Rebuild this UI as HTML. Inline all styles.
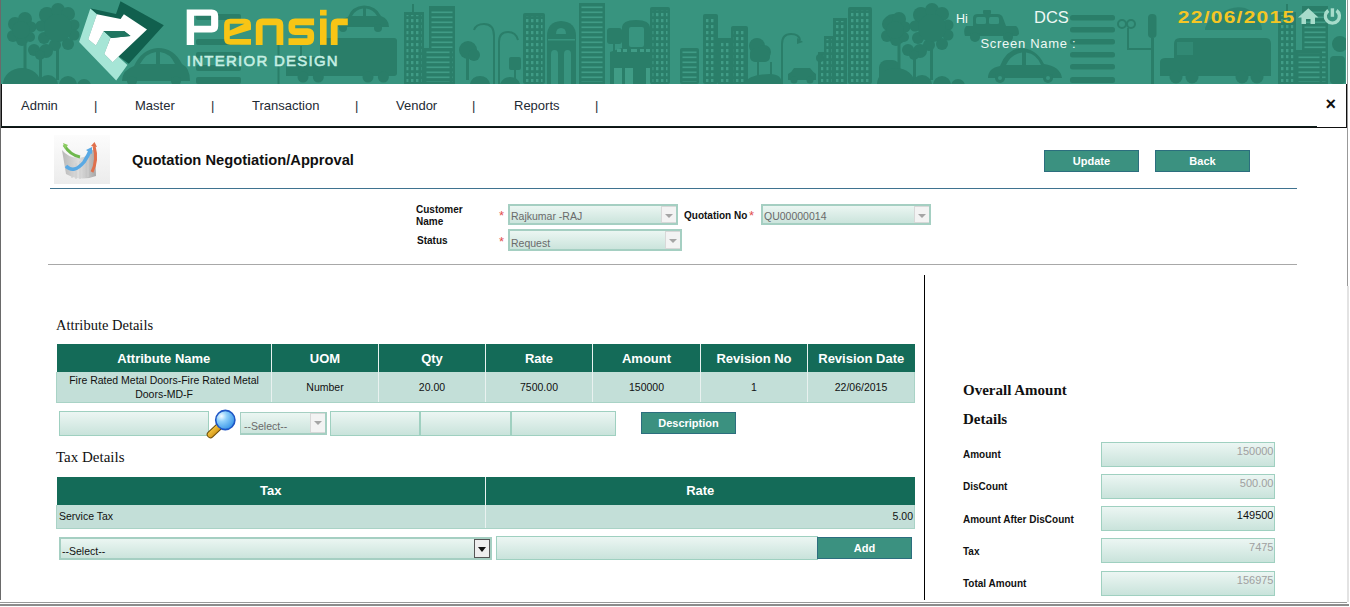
<!DOCTYPE html>
<html><head><meta charset="utf-8">
<style>
*{margin:0;padding:0;box-sizing:border-box}
html,body{width:1350px;height:607px;overflow:hidden;background:#fff;font-family:"Liberation Sans",sans-serif;position:relative}
.a{position:absolute}
#hdr{left:0;top:0;width:1343px;height:84px;background:#38947f;overflow:hidden}
#nav{left:1px;top:84px;width:1346px;height:44px;border:1px solid #111;border-top:none;background:#fff}
.nv{position:absolute;top:98px;font-size:13px;color:#1e2a33;line-height:16px}
.lbl{position:absolute;font-size:10px;font-weight:bold;color:#111;line-height:12px}
.star{position:absolute;color:#e25050;font-size:13px;line-height:13px}
.sel{position:absolute;border:2px solid #a5cfc2;background:linear-gradient(#ebf6f2,#cbe4dc);font-size:10.5px;color:#6a6a6a;line-height:14px;padding-left:1px}
.sel .dd{position:absolute;right:0;top:0;bottom:0;width:15px;background:#f3f3f3;border:1px solid #d8d8d8;border-right:none}
.sel .dd:after{content:"";position:absolute;left:2.5px;top:7px;border-left:4px solid transparent;border-right:4px solid transparent;border-top:4.5px solid #a5a5a5}
.inp{position:absolute;border:1px solid #9fd0c0;background:linear-gradient(#ecf6f3,#c9e3db)}
.btn{position:absolute;background:#3b9180;border:1px solid #2c6e7e;color:#fff;font-weight:bold;font-size:11px;text-align:center;line-height:20px}
.serif{position:absolute;font-family:"Liberation Serif",serif;color:#111}
table{border-collapse:collapse;position:absolute;table-layout:fixed}
th{background:#146b58;color:#fff;font-size:13px;font-weight:bold;height:28px;border-right:1.5px solid #e9f2f0;text-align:center}
td{background:#c3dfd8;font-size:10.5px;color:#111;text-align:center;border-right:1.5px solid #e9f2f0;border-bottom:1px solid #a9d3c6}
td:first-child{border-left:1px solid #a9d3c6}
td:last-child{border-right:1px solid #a9d3c6!important}
.rl{position:absolute;font-size:10px;font-weight:bold;color:#111;line-height:12px;margin-top:1px}
.ri{position:absolute;left:1101px;width:174px;height:25px;border:1px solid #9fd0c0;background:linear-gradient(#ecf6f3,#c9e3db);font-size:11px;color:#a0a0a0;text-align:right;padding-right:0.5px;padding-top:1px;line-height:15px}
.sel .dk:after{border-top-color:#111;top:7px;left:3px;border-left-width:4px;border-right-width:4px;border-top-width:5px}
</style></head><body>

<svg class="a" style="left:0;top:0" width="1346" height="84" viewBox="0 0 1346 84">
<defs>
<pattern id="win" x="0" y="0" width="5" height="6" patternUnits="userSpaceOnUse"><rect width="5" height="6" fill="#2a7e69"/><rect x="1" y="1" width="2.4" height="3.2" fill="#409c86"/></pattern>
<pattern id="str" x="0" y="0" width="6" height="5" patternUnits="userSpaceOnUse"><rect width="6" height="5" fill="#2a7e69"/><rect x="0" y="1.5" width="6" height="1.6" fill="#409c86"/></pattern>
</defs>
<rect width="1346" height="84" fill="#38947f"/><rect width="1" height="84" fill="#3d6b60"/>
<g fill="#2a7e69">
<!-- left trees -->
<circle cx="15" cy="24" r="7"/><circle cx="25" cy="19" r="7"/><circle cx="31" cy="27" r="5.5"/><circle cx="13" cy="36" r="6"/><circle cx="22" cy="40" r="6"/><circle cx="30" cy="37" r="5"/><circle cx="21" cy="30" r="9"/><circle cx="47" cy="15" r="8"/><circle cx="58" cy="10" r="7"/><circle cx="68" cy="14" r="7"/><circle cx="74" cy="25" r="5.5"/><circle cx="74" cy="35" r="5.5"/><circle cx="68" cy="44" r="6"/><circle cx="55" cy="45" r="6"/><circle cx="44" cy="38" r="6"/><circle cx="41" cy="26" r="5.5"/><circle cx="58" cy="28" r="14"/><circle cx="34" cy="50" r="6"/><circle cx="46" cy="51" r="7"/><circle cx="40" cy="55" r="5"/><rect x="23.5" y="44" width="3" height="30"/><rect x="39" y="55" width="3" height="25"/><rect x="56" y="46" width="3" height="34"/><ellipse cx="22" cy="84" rx="19" ry="16"/><circle cx="48" cy="85" r="10"/><circle cx="68" cy="85" r="9"/><circle cx="84" cy="86" r="7"/>
<!-- stripes behind logo -->
<rect x="196" y="14" width="45" height="6" rx="2"/><rect x="196" y="39" width="45" height="6" rx="2"/><rect x="196" y="52" width="45" height="6" rx="2"/><rect x="196" y="65" width="45" height="6" rx="2"/><rect x="196" y="77" width="45" height="7" rx="2"/>
<!-- car left -->
<path d="M122 81 Q122 70 134 66 Q142 49 158 48 Q174 48 182 64 Q190 68 190 81 Z"/><path d="M140 64 Q146 53 156 52 V64Z M160 52 Q170 53 175 64 H160Z" fill="#38947f"/><circle cx="132" cy="81" r="5"/><circle cx="176" cy="81" r="5"/>
<!-- truck behind ensir -->
<rect x="320" y="38" width="77" height="38" rx="3"/><path d="M286 76 V62 Q286 57 291 57 H321 V76Z"/>
<rect x="277.5" y="44" width="2" height="40"/><rect x="300" y="46" width="2" height="12"/>
<circle cx="303" cy="77" r="5.5"/><circle cx="318.3" cy="77" r="5.5"/><circle cx="368" cy="77" r="5.5"/><circle cx="383.4" cy="77" r="5.5"/>
<!-- top car -->
<path d="M338 27 Q338 19 348 17 Q352 6 364 5.5 Q376 5.5 381 16 Q389 19 389 27 Z"/><path d="M352 16 Q356 9 363 8.5 V16Z M366 8.5 Q373 9 377 16 H366Z" fill="#38947f"/><circle cx="343" cy="28" r="4"/><circle cx="378" cy="28" r="4"/>
<!-- buildings 400-610 -->
<rect x="404.0" y="12.0" width="20.0" height="72.0"/><rect x="406.5" y="15.0" width="15.0" height="67.0" fill="url(#win)"/><rect x="412" y="4" width="2" height="8"/>
<rect x="429.0" y="6.0" width="26.0" height="78.0"/><rect x="431.5" y="9.0" width="21.0" height="73.0" fill="url(#str)"/>
<rect x="424.0" y="48.0" width="28.0" height="36.0"/><rect x="426.5" y="51.0" width="23.0" height="31.0" fill="url(#str)"/>
<circle cx="468" cy="50" r="9"/><circle cx="474" cy="55" r="6"/><rect x="466" y="56" width="3" height="24"/>
<path d="M470 84 Q472 76 480 76 Q488 76 490 84Z"/><path d="M500 84 Q503 77 510 77 Q518 77 520 84Z"/>
<path d="M494 84 V36 Q494 24 484 24 Q476 24 474 30" fill="none" stroke="#2a7e69" stroke-width="2"/>
<path d="M499 84 V42 Q499 32 508 32 Q516 32 518 40" fill="none" stroke="#2a7e69" stroke-width="2"/>
<rect x="509" y="57" width="12" height="13" rx="2"/><rect x="514" y="70" width="2" height="14"/>
<rect x="523.0" y="13.0" width="22.0" height="71.0" rx="2"/><rect x="525.5" y="16.0" width="17.0" height="66.0" fill="url(#win)"/>
<path d="M547 84 V36 Q547 22 561 21 Q576 22 576 36 V84Z"/>
<path d="M556 34 Q556 28 561 28 Q566 28 566 34Z" fill="#38947f"/><rect x="548" y="39" width="27" height="1.5" fill="#38947f"/>
<path d="M551 84 V54 Q551 50 554.5 50 Q558 50 558 54 V84Z" fill="#38947f"/><path d="M564 84 V54 Q564 50 567.5 50 Q571 50 571 54 V84Z" fill="#38947f"/>
<rect x="579.0" y="3.0" width="26.0" height="81.0"/><rect x="581.5" y="6.0" width="21.0" height="76.0" fill="url(#str)"/>
<rect x="607" y="28" width="15" height="16" rx="3"/><rect x="613" y="44" width="2" height="40"/>
<path d="M610 84 V52 L622 48 V28 Q622 20 636 20 Q650 20 650 28 V48 L667 52 V84Z"/>
<rect x="629" y="27" width="15" height="20" rx="2" fill="#38947f"/>
<rect x="617" y="49" width="4" height="3" fill="#409c86"/><rect x="623" y="49" width="4" height="3" fill="#409c86"/><rect x="631" y="49" width="6" height="3" fill="#409c86"/><rect x="640" y="49" width="4" height="3" fill="#409c86"/><rect x="646" y="49" width="4" height="3" fill="#409c86"/>
<rect x="614" y="68" width="8" height="16" fill="#409c86"/><rect x="625" y="68" width="8" height="16" fill="#409c86"/><rect x="646" y="68" width="5" height="16" fill="#409c86"/>
<rect x="650.0" y="7.0" width="20.0" height="77.0" rx="2"/><rect x="652.5" y="10.0" width="15.0" height="72.0" fill="url(#win)"/>
<rect x="680.0" y="48.0" width="19.0" height="36.0" rx="2"/><rect x="682.5" y="51.0" width="14.0" height="31.0" fill="url(#str)"/>
<rect x="703.0" y="14.0" width="15.0" height="70.0" rx="2"/><rect x="705.5" y="17.0" width="10.0" height="65.0" fill="url(#win)"/>
<rect x="718.0" y="38.0" width="15.0" height="46.0"/><rect x="720.5" y="41.0" width="10.0" height="41.0" fill="url(#win)"/>
<rect x="731.0" y="26.0" width="17.0" height="58.0" rx="2"/><rect x="733.5" y="29.0" width="12.0" height="53.0" fill="url(#win)"/>
<circle cx="757" cy="46" r="8"/><circle cx="764" cy="52" r="7"/><rect x="750" y="48" width="20" height="14" rx="5"/><rect x="757" y="56" width="2" height="22"/>
<path d="M742 84 Q750 74 770 74 Q782 74 782 84Z"/>
<rect x="770" y="62" width="2" height="16"/>
<path d="M782 84 V44 Q782 34 791 34 Q799 34 800 40" fill="none" stroke="#2a7e69" stroke-width="2"/><path d="M797 38 L803 42 L797 44Z"/>
<path d="M788 80 V74 Q792 72 794 68 H810 Q813 72 816 74 V80Z"/><circle cx="794" cy="80" r="3.5"/><circle cx="810" cy="80" r="3.5"/>
<rect x="833.0" y="18.0" width="14.0" height="66.0"/><rect x="835.5" y="21.0" width="9.0" height="61.0" fill="url(#win)"/><rect x="824.0" y="36.0" width="10.0" height="48.0"/><rect x="826.5" y="39.0" width="5.0" height="43.0" fill="url(#win)"/><rect x="818.0" y="52.0" width="8.0" height="32.0"/><rect x="820.5" y="55.0" width="3.0" height="27.0" fill="url(#win)"/><circle cx="820" cy="58" r="4"/>
<rect x="848.0" y="7.0" width="24.0" height="77.0" rx="2"/><rect x="850.5" y="10.0" width="19.0" height="72.0" fill="url(#win)"/>
<circle cx="893" cy="24" r="10"/><circle cx="898" cy="36" r="8"/><rect x="879" y="60" width="21" height="24" rx="8"/>
<!-- right trees -->
<circle cx="889" cy="24" r="7"/><circle cx="899" cy="19" r="7"/><circle cx="905" cy="27" r="5.5"/><circle cx="887" cy="36" r="6"/><circle cx="896" cy="40" r="6"/><circle cx="904" cy="37" r="5"/><circle cx="895" cy="30" r="9"/><circle cx="921" cy="15" r="8"/><circle cx="932" cy="10" r="7"/><circle cx="942" cy="14" r="7"/><circle cx="948" cy="25" r="5.5"/><circle cx="948" cy="35" r="5.5"/><circle cx="942" cy="44" r="6"/><circle cx="929" cy="45" r="6"/><circle cx="918" cy="38" r="6"/><circle cx="915" cy="26" r="5.5"/><circle cx="932" cy="28" r="14"/><circle cx="908" cy="50" r="6"/><circle cx="920" cy="51" r="7"/><circle cx="914" cy="55" r="5"/><rect x="897.5" y="44" width="3" height="30"/><rect x="913" y="55" width="3" height="25"/><rect x="930" y="46" width="3" height="34"/><ellipse cx="896" cy="84" rx="19" ry="16"/><circle cx="922" cy="85" r="10"/><circle cx="942" cy="85" r="9"/><circle cx="958" cy="86" r="7"/>
<!-- taxi -->
<rect x="983" y="10" width="8" height="4" rx="1"/><path d="M973 26 V18 Q973 14 978 14 H997 Q1002 14 1003 18 L1006 26 H1016 Q1019 28 1019 34 L1017 36 H965 Q963 30 966 26Z"/><circle cx="975" cy="37" r="5"/><circle cx="1008" cy="37" r="5"/><rect x="976" y="17" width="10" height="7" rx="1.5" fill="#38947f"/><rect x="989" y="17" width="10" height="7" rx="1.5" fill="#38947f"/>
<!-- car 2 -->
<path d="M988 78 Q988 68 1000 66 Q1006 50 1020 48 Q1036 48 1044 64 Q1060 66 1062 78Z"/><circle cx="1000" cy="78" r="5"/><circle cx="1048" cy="78" r="5"/><path d="M1006 65 Q1011 54 1022 52.5 V65Z M1026 52.5 Q1037 54 1041 65 H1026Z" fill="#38947f"/><circle cx="1000" cy="78" r="2" fill="#38947f"/><circle cx="1048" cy="78" r="2" fill="#38947f"/>
<!-- zebra -->
<rect x="1070" y="15" width="45" height="5.5" rx="2.5"/><rect x="1070" y="27" width="45" height="5.5" rx="2.5"/><rect x="1070" y="39" width="45" height="5.5" rx="2.5"/><rect x="1070" y="52" width="45" height="5.5" rx="2.5"/><rect x="1070" y="64" width="45" height="5.5" rx="2.5"/><rect x="1070" y="77" width="45" height="6" rx="2.5"/>
<!-- lamp -->
<rect x="1148" y="14" width="8.5" height="24" rx="4"/><rect x="1151" y="38" width="3" height="46"/>
<path d="M1128 28 V49 H1152" fill="none" stroke="#2a7e69" stroke-width="2"/>
<circle cx="1122" cy="24" r="4" fill="none" stroke="#2a7e69" stroke-width="2"/><circle cx="1131" cy="24" r="4" fill="none" stroke="#2a7e69" stroke-width="2"/>
<!-- truck right -->
<path d="M1174 58 V44 Q1174 38 1180 38 H1266 Q1271 38 1271 44 V76 H1160 V62 Q1160 58 1166 58Z"/>
<rect x="1177" y="42" width="16" height="13" fill="#38947f" opacity="0.5"/>
<circle cx="1176" cy="77" r="6.5"/><circle cx="1192" cy="77" r="6.5"/><circle cx="1242" cy="77" r="6.5"/><circle cx="1257" cy="77" r="6.5"/>
<!-- car behind date -->
<path d="M1205 28 Q1208 18 1220 14 Q1232 5 1245 8 Q1256 12 1260 22 Q1262 26 1262 30 H1205Z" opacity="0.7"/>
<!-- right buildings -->
<rect x="1278.0" y="12.0" width="18.0" height="72.0"/><rect x="1280.5" y="15.0" width="13.0" height="67.0" fill="url(#win)"/><rect x="1286" y="4" width="2" height="8"/>
<rect x="1302.0" y="6.0" width="26.0" height="78.0"/><rect x="1304.5" y="9.0" width="21.0" height="73.0" fill="url(#str)"/>
<rect x="1296.0" y="50.0" width="26.0" height="34.0"/><rect x="1298.5" y="53.0" width="21.0" height="29.0" fill="url(#str)"/>
<circle cx="1340" cy="44" r="8"/><rect x="1330" y="56" width="15" height="28" rx="4"/>
</g>
<!-- logo mark -->
<path d="M89.9 8.2 L116 14 L120.5 1.3 L163.8 25.2 L128.8 63.7 L110 50 L96.9 14.2Z" fill="#11604e"/>
<path d="M90.3 8.4 L96.9 14.2 L88.2 39.2 L95.9 45.5 L103.8 31 L110.6 37.5 L104.3 53.9 L112.7 62.3 L118.3 56.7 L127.4 65.1 L116.2 80.5 L79.1 42Z" fill="#a6e5d6"/>
<path d="M96.9 14.2 L120.6 19.1 L123.9 14.2 L147 29.4 L118.3 56.7 L112.7 62.3 L104.3 53.9 L110.6 37.5 L111.4 37.9 L130.5 35.9 L124.5 31.3 L103.8 31 L95.9 45.5 L88.2 39.2Z" fill="#ffffff"/>
<path d="M103.8 31 L124.5 31.3 L130.5 35.9 L111.4 37.9Z" fill="#1f7560"/>
<!-- Pensir -->
<path fill-rule="evenodd" d="M186.7 45 V9.45 H211.7 Q218.2 9.45 218.2 16 V26 Q218.2 32.4 211.7 32.4 H194.1 V45 Z M194.1 15.7 H211.1 V25.8 H194.1 Z" fill="#ffffff"/>
<path fill-rule="evenodd" d="M224.1 25 Q224.1 18.8 230.3 18.8 H244.8 Q251 18.8 251 25 V29.7 L229.8 36.2 V38.9 H251 V44.8 H230.3 Q224.1 44.8 224.1 38.6 Z M229.8 23.7 H244.5 L229.8 30.5 Z" fill="#f8c515"/>
<path d="M255.8 44.9 V25 Q255.8 18.5 262.3 18.5 H276.8 Q283.3 18.5 283.3 25 V44.9 H276.5 V25.3 H262.6 V44.9 Z" fill="#f8c515"/>
<path d="M314.1 18.5 H295 Q288.5 18.5 288.5 25 V28.5 Q288.5 35 295 35 H307.4 V38.2 H288.5 V44.9 H307.6 Q314.1 44.9 314.1 38.4 V34.8 Q314.1 28.3 307.6 28.3 H295.2 V25.3 H314.1 Z" fill="#f8c515"/>
<rect x="320" y="9.8" width="6.6" height="5.7" fill="#f8c515"/><rect x="320" y="18.5" width="6.6" height="26.4" fill="#f8c515"/>
<path d="M330.8 44.9 V25 Q330.8 18.5 337.3 18.5 H347.8 V25.3 H337.6 V44.9 Z" fill="#f8c515"/>
<text x="186.8" y="66" font-family="Liberation Sans" font-size="15" letter-spacing="1.25" stroke="#c6efe3" stroke-width="0.55" fill="#c6efe3">INTERIOR DESIGN</text>
<!-- right texts -->
<text x="956" y="23" font-family="Liberation Sans" font-size="12.5" fill="#f2fbf8">Hi</text>
<text x="1034" y="23" font-family="Liberation Sans" font-size="16.5" fill="#eef8f4">DCS</text>
<text x="980.5" y="48" font-family="Liberation Sans" font-size="13" letter-spacing="0.7" fill="#eef8f4">Screen Name :</text>
<text x="1177.8" y="23.1" font-family="Liberation Sans" font-weight="bold" font-size="17" letter-spacing="1" textLength="117.6" lengthAdjust="spacingAndGlyphs" fill="#f5c624">22/06/2015</text>
<!-- home -->
<path d="M1298 17.5 L1308.3 8.3 L1318.5 17.5 H1315 V24 H1310.5 V19 H1306 V24 H1301.5 V17.5Z" fill="#a7dccb"/>
<!-- power -->
<path d="M1328.3 10.5 A7 7 0 1 0 1336.5 10.5" fill="none" stroke="#a7dccb" stroke-width="3.4"/><rect x="1330.7" y="8.3" width="3.4" height="8.5" fill="#a7dccb"/>
</svg>

<div class="a" style="left:0;top:0;width:1px;height:600px;background:#6a6a6a"></div>
<div class="a" style="left:1347px;top:0;width:1px;height:286px;background:#999"></div>
<div class="a" style="left:1347px;top:286px;width:1.5px;height:316px;background:#e3e3e3"></div>

<div id="nav" class="a"></div>
<div class="a" style="left:1px;top:126px;width:1316px;height:1px;background:#0d1f1c"></div>
<div class="nv" style="left:21px">Admin</div>
<div class="nv" style="left:94px">|</div>
<div class="nv" style="left:135px">Master</div>
<div class="nv" style="left:211px">|</div>
<div class="nv" style="left:252px">Transaction</div>
<div class="nv" style="left:355px">|</div>
<div class="nv" style="left:396px">Vendor</div>
<div class="nv" style="left:472px">|</div>
<div class="nv" style="left:514px">Reports</div>
<div class="nv" style="left:595px">|</div>
<div class="a" style="left:1325.5px;top:94px;font-size:18px;font-weight:bold;color:#111">&#215;</div>

<!-- title -->
<svg class="a" style="left:54px;top:135px" width="56" height="49" viewBox="54 135 56 49">
<defs><linearGradient id="ibg" x1="0" y1="0" x2="0" y2="1"><stop offset="0" stop-color="#fcfcfc"/><stop offset="1" stop-color="#ececec"/></linearGradient>
<linearGradient id="gb" x1="0" y1="0" x2="1" y2="0"><stop offset="0" stop-color="#b8b8b8"/><stop offset="0.5" stop-color="#dedede"/><stop offset="1" stop-color="#a8a8a8"/></linearGradient></defs>
<rect x="54" y="135" width="56" height="49" fill="url(#ibg)"/>
<path d="M62 150 Q70 160 84 157 L95 148 L96 176 Q80 182 66 174 Z" fill="url(#gb)"/>
<g stroke="#cfcfcf" stroke-width="1.2"><line x1="72" y1="165" x2="72" y2="178"/><line x1="76" y1="163" x2="76" y2="179"/><line x1="80" y1="161" x2="80" y2="179"/><line x1="84" y1="158" x2="84" y2="178"/><line x1="88" y1="156" x2="88" y2="177"/></g>
<path d="M64 145 Q70 155 80 157" fill="none" stroke="#6fb84e" stroke-width="3"/>
<path d="M63 143 L68 145 L65 149Z" fill="#8ccc60"/>
<path d="M66 166 Q74 174 84 162 Q88 156 90 151" fill="none" stroke="#59a9e4" stroke-width="3.5"/>
<path d="M86 150 L92 147 L92 154Z" fill="#59a9e4"/>
<path d="M94 146 Q98 160 92 172" fill="none" stroke="#e0704c" stroke-width="3"/>
<path d="M91 146 L94.5 142 L97 147Z" fill="#e0704c"/>
</svg>
<div class="a" style="left:132px;top:152px;font-size:14.7px;font-weight:bold;color:#111">Quotation Negotiation/Approval</div>
<div class="btn" style="left:1044px;top:150px;width:95px;height:22px">Update</div>
<div class="btn" style="left:1155px;top:150px;width:95px;height:22px">Back</div>
<div class="a" style="left:50px;top:188px;width:1247px;height:1px;background:#3f7390"></div>

<!-- form -->
<div class="lbl" style="left:416px;top:204px;line-height:12.2px">Customer<br>Name</div>
<div class="star" style="left:499px;top:208.5px">*</div>
<div class="sel" style="left:508px;top:204px;width:170px;height:21px;padding-top:3px">Rajkumar -RAJ<div class="dd"></div></div>
<div class="lbl" style="left:684px;top:210px">Quotation No</div>
<div class="star" style="left:749px;top:208.5px">*</div>
<div class="sel" style="left:761px;top:204px;width:170px;height:21px;padding-top:3px">QU00000014<div class="dd"></div></div>
<div class="lbl" style="left:417px;top:235px">Status</div>
<div class="star" style="left:499px;top:234.5px">*</div>
<div class="sel" style="left:508px;top:229px;width:174px;height:22px;padding-top:5px">Request<div class="dd"></div></div>
<div class="a" style="left:48px;top:264px;width:1249px;height:1px;background:#a8a8a8"></div>

<div class="a" style="left:924px;top:275px;width:1px;height:325px;background:#000"></div>

<!-- attribute -->
<div class="serif" style="left:56px;top:317px;font-size:14.5px">Attribute Details</div>
<table style="left:56px;top:344px;width:858px">
<colgroup><col style="width:215px"><col style="width:107px"><col style="width:107px"><col style="width:107px"><col style="width:108px"><col style="width:107px"><col style="width:107px"></colgroup>
<tr><th>Attribute Name</th><th>UOM</th><th>Qty</th><th>Rate</th><th>Amount</th><th>Revision No</th><th style="border-right:none">Revision Date</th></tr>
<tr style="height:30px"><td style="line-height:14px;padding-top:1px">Fire Rated Metal Doors-Fire Rated Metal Doors-MD-F</td><td>Number</td><td>20.00</td><td>7500.00</td><td>150000</td><td>1</td><td style="border-right:none">22/06/2015</td></tr>
</table>
<div class="inp" style="left:59px;top:411px;width:150px;height:25px"></div>
<svg class="a" style="left:205px;top:407px" width="34" height="32" viewBox="205 407 34 32">
<defs><radialGradient id="mg" cx="0.3" cy="0.3" r="0.8"><stop offset="0" stop-color="#f4fbff"/><stop offset="0.35" stop-color="#8fd0fb"/><stop offset="1" stop-color="#2f8fe6"/></radialGradient>
<linearGradient id="hg" x1="0" y1="0" x2="1" y2="1"><stop offset="0" stop-color="#ffd34a"/><stop offset="1" stop-color="#c98a10"/></linearGradient></defs>
<line x1="210.5" y1="434.5" x2="218.5" y2="427" stroke="#6a4a08" stroke-width="7.5" stroke-linecap="round"/>
<line x1="210.5" y1="434.5" x2="218.5" y2="427" stroke="url(#hg)" stroke-width="5.5" stroke-linecap="round"/>
<circle cx="225.3" cy="420" r="9.6" fill="url(#mg)" stroke="#1f55c4" stroke-width="1.6"/>
</svg>
<div class="sel" style="left:240px;top:412px;width:87px;height:23px;padding-top:6px;padding-left:3px;border-width:1px 2px 2px 1px">--Select--<div class="dd"></div></div>
<div class="inp" style="left:330px;top:411px;width:90px;height:25px"></div>
<div class="inp" style="left:420px;top:411px;width:91px;height:25px"></div>
<div class="inp" style="left:511px;top:411px;width:105px;height:25px"></div>
<div class="btn" style="left:641px;top:412px;width:95px;height:22px">Description</div>

<!-- tax -->
<div class="serif" style="left:56px;top:448.5px;font-size:15px">Tax Details</div>
<table style="left:56px;top:476.5px;width:858px">
<colgroup><col style="width:429px"><col style="width:429px"></colgroup>
<tr><th>Tax</th><th style="border-right:none">Rate</th></tr>
<tr style="height:24px"><td style="text-align:left;padding-left:2px">Service Tax</td><td style="text-align:right;padding-right:1px;border-right:none">5.00</td></tr>
</table>
<div class="sel" style="left:59px;top:537px;width:433px;height:23px;padding-top:5px;color:#111">--Select--<div class="dd dk" style="width:16px;background:#eee;border:1px solid #555"></div></div>
<div class="inp" style="left:496px;top:536px;width:322px;height:24px"></div>
<div class="btn" style="left:817px;top:537px;width:95px;height:22px">Add</div>

<!-- overall -->
<div class="serif" style="left:963px;top:382px;font-size:15px;font-weight:bold">Overall Amount</div>
<div class="serif" style="left:963px;top:411px;font-size:15px;font-weight:bold">Details</div>
<div class="rl" style="left:963px;top:448px">Amount</div>
<div class="ri" style="top:442px">150000</div>
<div class="rl" style="left:963px;top:480px">DisCount</div>
<div class="ri" style="top:474px">500.00</div>
<div class="rl" style="left:963px;top:513px">Amount After DisCount</div>
<div class="ri" style="top:506px;color:#111">149500</div>
<div class="rl" style="left:963px;top:545px">Tax</div>
<div class="ri" style="top:538px">7475</div>
<div class="rl" style="left:963px;top:577px">Total Amount</div>
<div class="ri" style="top:571px">156975</div>

<div class="a" style="left:0;top:602px;width:1347px;height:1px;background:#9a9a9a"></div>
<div class="a" style="left:0;top:604px;width:1349px;height:2px;background:#8c8c8c"></div>
</body></html>
